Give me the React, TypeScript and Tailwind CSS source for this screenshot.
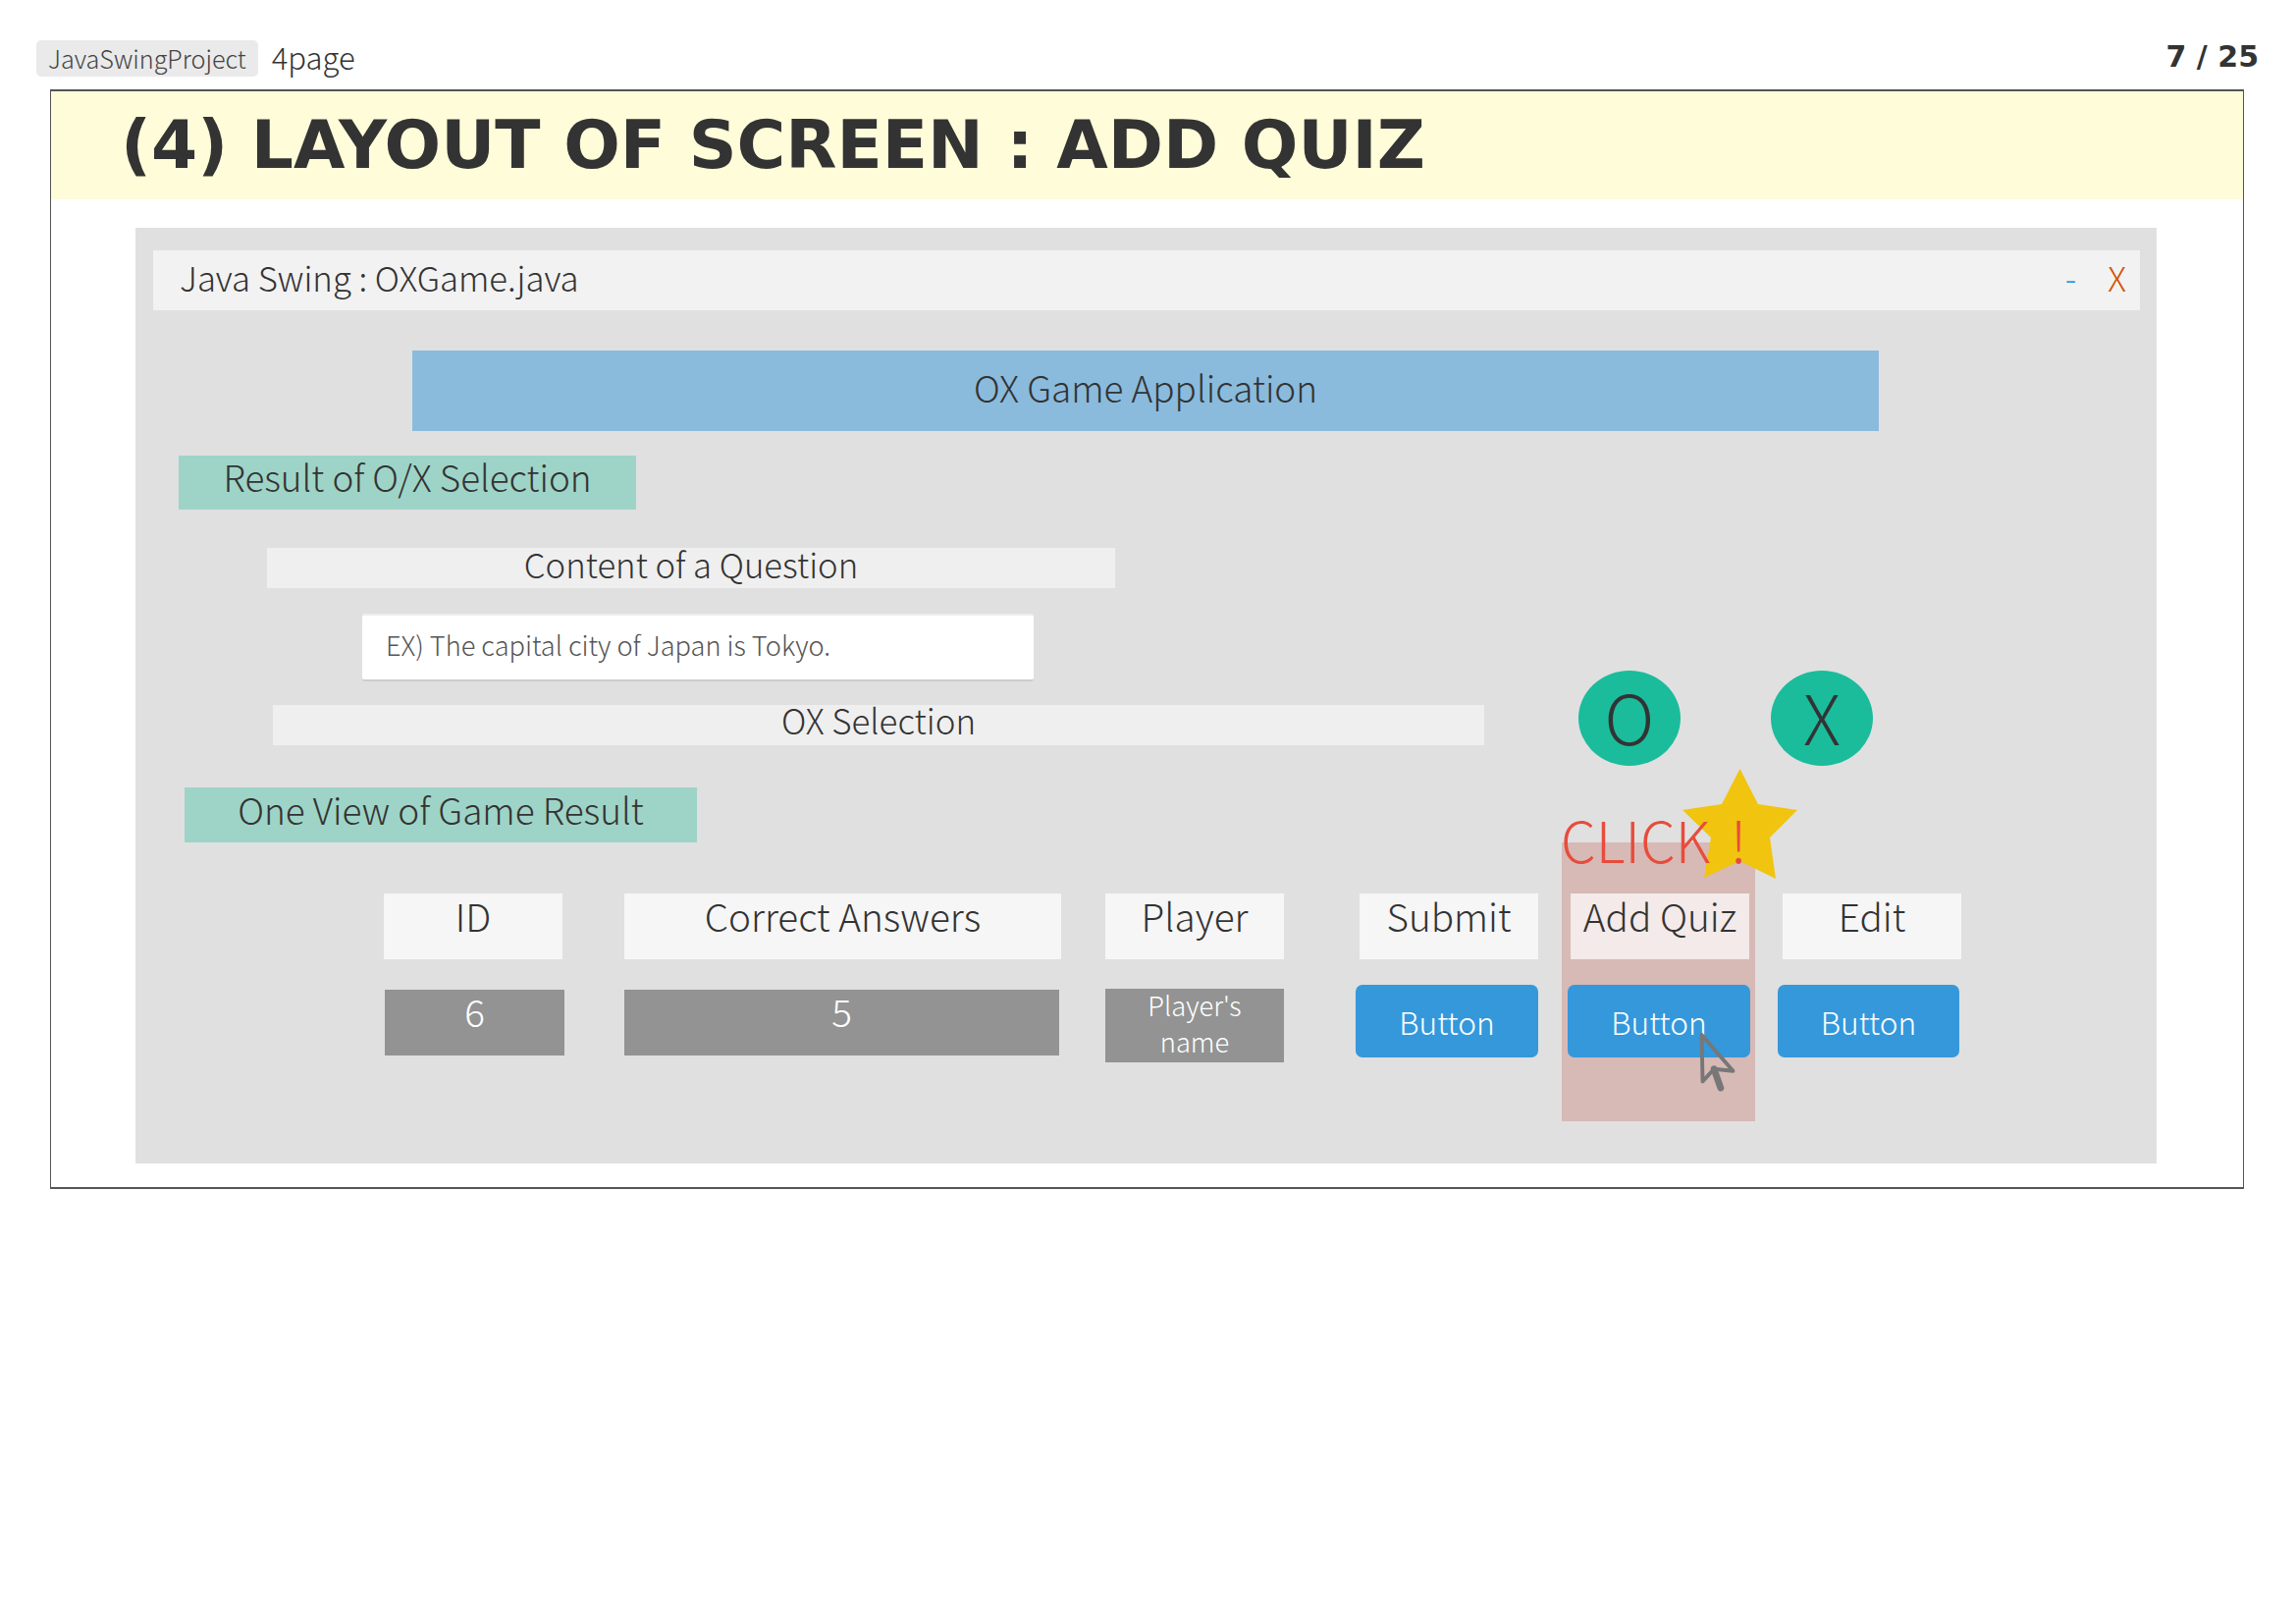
import React from "react";

const headers = [
  { t: "ID", w: "w-[182px]", ml: "ml-[253px]" },
  { t: "Correct Answers", w: "w-[445px]", ml: "ml-[63px]" },
  { t: "Player", w: "w-[182px]", ml: "ml-[45px]" },
  { t: "Submit", w: "w-[182px]", ml: "ml-[77px]" },
  { t: "Add Quiz", w: "w-[182px]", ml: "ml-[33px]" },
  { t: "Edit", w: "w-[182px]", ml: "ml-[34px]" },
];

function Btn({ cls }: { cls: string }) {
  return (
    <button className={`${cls} h-[74px] rounded-[7px] bg-[#3498db] text-[31.6px] leading-[70px] text-white`}>Button</button>
  );
}

export default function App() {
  return (
    <div className="h-[1653px] w-[2339px] overflow-hidden bg-white font-['Noto_Sans_CJK_KR',sans-serif] font-light text-[#333333]">
      <div className="flex h-[91px] items-start justify-between">
        <div className="flex items-center pl-[37px] pt-[41px]">
          <span className="h-[37px] rounded-[5px] bg-[#eaeaea] px-[12px] text-[25.2px] leading-[36px] text-[#444444]">JavaSwingProject</span>
          <span className="ml-[14px] mb-[3px] text-[31px] leading-[34px]">4page</span>
        </div>
        <span className="pr-[38px] pt-[40px] font-['DejaVu_Sans',sans-serif] text-[30px] font-bold leading-[36px]">7 / 25</span>
      </div>
      <div className="ml-[51px] h-[1120px] w-[2235px] border-x-[1px] border-b-[2px] border-t-[2px] border-x-[#555555] border-b-[#555555] border-t-[#555555]">
        <div className="h-[110px] bg-[#fefcd9] pl-[71px] font-['DejaVu_Sans',sans-serif] text-[67.8px] font-bold leading-[110px] whitespace-nowrap">
          (4) LAYOUT OF SCREEN : ADD QUIZ
        </div>
        <div className="relative ml-[86px] mt-[29px] h-[953px] w-[2059px] bg-[#e0e0e0] pt-[23px]">
          <div className="absolute left-[1453px] top-[626px] h-[284px] w-[197px] bg-[#d7b9b6]" />
          <svg className="absolute left-[1576px] top-[551px] z-10" width="118" height="113" viewBox="0 0 118 113">
            <polygon fill="#f1c40f" points="58.5,0 77,36 117,42 89,70 95,112 58.5,94 22,111 29,70 0,42 40,36" />
          </svg>
          <div className="absolute left-[1452px] top-[587px] z-20 text-[57px] leading-[70px] text-[#e74c3c] whitespace-nowrap [word-spacing:8px]">CLICK !</div>

          <div className="ml-[18px] mr-[17px] flex h-[61px] items-center justify-between bg-[#f2f2f2] pl-[27px] pr-[14px] text-[34.7px] leading-[55px]">
            <span className="mb-[6px]">Java Swing : OXGame.java</span>
            <span className="mb-[6px] flex gap-[32px]">
              <span className="text-[#3498db]">-</span>
              <span className="text-[#d35400]">X</span>
            </span>
          </div>

          <div className="ml-[282px] mt-[41px] h-[82px] w-[1494px] bg-[#8abbdd] text-center text-[36.9px] leading-[74px]">OX Game Application</div>

          <div className="ml-[44px] mt-[25px] h-[55px] w-[466px] bg-[#9ed4c7] text-center text-[36.8px] leading-[43px]">Result of O/X Selection</div>

          <div className="mt-[39px] flex items-start">
            <div className="w-[1470px]">
              <div className="ml-[134px] h-[41px] w-[864px] bg-[#efefef] text-center text-[34.7px] leading-[33px]">Content of a Question</div>
              <div className="ml-[231px] mt-[26px] h-[69px] w-[684px] rounded-[3px] border-b-[2px] border-t-[2px] border-b-[#cccccc] border-t-[#eeeeee] bg-white pl-[24px] text-[27.2px] leading-[58px] text-[#555555]">
                EX) The capital city of Japan is Tokyo.
              </div>
              <div className="ml-[140px] mt-[24px] h-[41px] w-[1234px] bg-[#efefef] text-center text-[34.9px] leading-[31px]">OX Selection</div>
            </div>
            <div className="mt-[125px] h-[97px] w-[104px] rounded-[50%] bg-[#1abc9c] text-center text-[70px] leading-[92px]">O</div>
            <div className="ml-[92px] mt-[125px] h-[97px] w-[104px] rounded-[50%] bg-[#1abc9c] text-center text-[70px] leading-[92px]">X</div>
          </div>

          <div className="ml-[50px] mt-[22px] h-[56px] w-[522px] bg-[#9ed4c7] text-center text-[36.9px] leading-[44px]">One View of Game Result</div>

          <div className="relative mt-[52px] flex">
            {headers.map((h) => (
              <div key={h.t} className={`${h.ml} ${h.w} h-[67px] bg-white/70 text-center text-[38.7px] leading-[45px]`}>{h.t}</div>
            ))}
          </div>

          <div className="relative mt-[26px] flex items-start">
            <div className="ml-[254px] mt-[5px] h-[67px] w-[183px] bg-[#939393] text-center text-[38.7px] leading-[43px] text-white">6</div>
            <div className="ml-[61px] mt-[5px] h-[67px] w-[443px] bg-[#939393] text-center text-[38.7px] leading-[43px] text-white">5</div>
            <div className="ml-[47px] mt-[4px] h-[75px] w-[182px] bg-[#939393] text-center text-[27.3px] leading-[37px] text-white">
              <div className="-translate-y-[2px]">Player's<br />name</div>
            </div>
            <Btn cls="ml-[73px] w-[186px]" />
            <Btn cls="ml-[30px] w-[186px]" />
            <Btn cls="ml-[28px] w-[185px]" />
            <svg className="absolute left-[1593px] top-[49px]" width="38" height="60" viewBox="-2 -2 38 62" fill="none">
              <path d="M0 0 L1 49 L13 36 L33 38 Z" stroke="#777777" strokeWidth="4" strokeLinejoin="round" />
              <path d="M13 36 L20 56" stroke="#777777" strokeWidth="7" strokeLinecap="round" />
            </svg>
          </div>
        </div>
      </div>
    </div>
  );
}
